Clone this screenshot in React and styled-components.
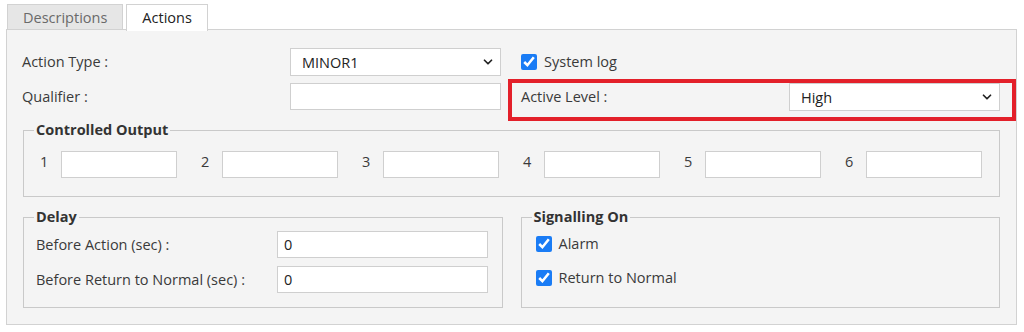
import styled, { createGlobalStyle } from "styled-components";
import { ChevronDown } from "lucide-react";

const GlobalStyle = createGlobalStyle`
  body {
    margin: 0;
    background: #ffffff;
    font-family: "Open Sans", "Liberation Sans", sans-serif;
    font-size: 14.5px;
    color: #3a3a3a;
  }
  * {
    box-sizing: border-box;
  }
`;

export default function App() {
  const outputs = ["1", "2", "3", "4", "5", "6"];
  return (
    <Page>
      <GlobalStyle />
      <Tabs>
        <Tab>Descriptions</Tab>
        <Tab active>Actions</Tab>
      </Tabs>
      <Panel>
        <TopGrid>
          <Label>Action Type :</Label>
          <SelectWrap>
            <Select defaultValue="MINOR1">
              <option>MINOR1</option>
              <option>MINOR2</option>
              <option>MAJOR</option>
            </Select>
            <Chevron>
              <ChevronDown size={14} strokeWidth={3} />
            </Chevron>
          </SelectWrap>
          <CheckRow indent="13px">
            <Check type="checkbox" defaultChecked />
            System log
          </CheckRow>

          <Label>Qualifier :</Label>
          <Input />
          <Highlight>
            <HighlightRow>
              <Label>Active Level :</Label>
              <SelectWrap>
                <Select defaultValue="High">
                  <option>High</option>
                  <option>Low</option>
                </Select>
                <Chevron>
                  <ChevronDown size={14} strokeWidth={3} />
                </Chevron>
              </SelectWrap>
            </HighlightRow>
          </Highlight>
        </TopGrid>

        <Groups>
          <Group>
            <Legend>Controlled Output</Legend>
            <OutputGrid>
              {outputs.map((n) => (
                <OutputCell key={n}>
                  <span>{n}</span>
                  <Input />
                </OutputCell>
              ))}
            </OutputGrid>
          </Group>

          <BottomRow>
            <Group>
              <Legend>Delay</Legend>
              <DelayGrid>
                <Label>Before Action (sec) :</Label>
                <Input defaultValue="0" pad="6px" />
                <Label>Before Return to Normal (sec) :</Label>
                <Input defaultValue="0" pad="6px" />
              </DelayGrid>
            </Group>
            <Group>
              <Legend>Signalling On</Legend>
              <SignalList>
                <CheckRow>
                  <Check type="checkbox" defaultChecked />
                  Alarm
                </CheckRow>
                <CheckRow>
                  <Check type="checkbox" defaultChecked />
                  Return to Normal
                </CheckRow>
              </SignalList>
            </Group>
          </BottomRow>
        </Groups>
      </Panel>
    </Page>
  );
}

const Page = styled.div`
  padding: 4px 0 0 6px;
  width: 1024px;
`;

const Tabs = styled.div`
  display: flex;
  gap: 3px;
  padding-left: 1px;
  height: 25px;
  position: relative;
  z-index: 1;
`;

const Tab = styled.div`
  height: ${(p) => (p.active ? "27px" : "25px")};
  padding: 0 15px 0 15px;
  padding-bottom: ${(p) => (p.active ? "2px" : "0")};
  display: flex;
  align-items: center;
  border: 1px solid #d2d2d2;
  border-bottom: none;
  background: ${(p) => (p.active ? "#ffffff" : "#e6e6e6")};
  color: ${(p) => (p.active ? "#222222" : "#6a6a6a")};
`;

const Panel = styled.div`
  width: 1011px;
  border: 1px solid #d2d2d2;
  background: #f4f4f4;
  padding: 18px 0 16px 15px;
`;

const TopGrid = styled.div`
  display: grid;
  grid-template-columns: 261px 211px 1fr;
  column-gap: 7px;
  row-gap: 7px;
  align-items: start;
`;

const Label = styled.div`
  line-height: 28px;
  color: #3a3a3a;
  white-space: nowrap;
`;

const SelectWrap = styled.div`
  position: relative;
  height: 28px;
`;

const Select = styled.select`
  appearance: none;
  width: 100%;
  height: 28px;
  margin: 0;
  padding: 0 24px 0 11px;
  border: 1px solid #cfcfcf;
  border-radius: 0;
  background: #ffffff;
  font-family: inherit;
  font-size: inherit;
  color: #222222;
  outline: none;
`;

const Chevron = styled.span`
  position: absolute;
  right: 6px;
  top: 7px;
  display: flex;
  color: #222222;
  pointer-events: none;
`;

const Input = styled.input`
  width: 100%;
  height: 27px;
  margin: 0;
  padding: 0 ${(p) => p.pad || "11px"};
  border: 1px solid #cfcfcf;
  border-radius: 0;
  background: #ffffff;
  font-family: inherit;
  font-size: inherit;
  color: #222222;
  outline: none;
`;

const CheckRow = styled.label`
  display: flex;
  align-items: center;
  gap: 7px;
  height: 27px;
  padding-left: ${(p) => p.indent || "0"};
  color: #3a3a3a;
  white-space: nowrap;
`;

const Check = styled.input`
  width: 16px;
  height: 16px;
  margin: 0;
  accent-color: #1a7cf5;
`;

const Highlight = styled.div`
  margin-top: -4px;
  border: 4px solid #e3202a;
  padding: 0 12px 6px 9px;
`;

const HighlightRow = styled.div`
  display: grid;
  grid-template-columns: 1fr 211px;
  align-items: center;
`;

const Groups = styled.div`
  padding: 0 16px 0 1px;
`;

const Group = styled.fieldset`
  margin: 0;
  padding: 0 10px;
  min-width: 0;
  border: 1px solid #c9c9c9;
`;

const Legend = styled.legend`
  padding: 0 2px;
  font-weight: 700;
  line-height: 18px;
  color: #333333;
`;

const OutputGrid = styled.div`
  display: grid;
  grid-template-columns: repeat(6, 137px);
  column-gap: 24px;
  padding: 12px 7px 18px 6px;
`;

const OutputCell = styled.div`
  display: grid;
  grid-template-columns: 21px 116px;
  align-items: center;
  color: #3a3a3a;

  span {
    margin-top: -6px;
  }
`;

const BottomRow = styled.div`
  display: grid;
  grid-template-columns: 1fr 1fr;
  column-gap: 18px;
  margin-top: 11px;
`;

const DelayGrid = styled.div`
  display: grid;
  grid-template-columns: 241px 1fr;
  row-gap: 8px;
  align-items: center;
  padding: 5px 4px 14px 2px;

  ${Label} {
    line-height: 27px;
  }
`;

const SignalList = styled.div`
  display: flex;
  flex-direction: column;
  gap: 7px;
  padding: 4px 0 0 4px;
`;
